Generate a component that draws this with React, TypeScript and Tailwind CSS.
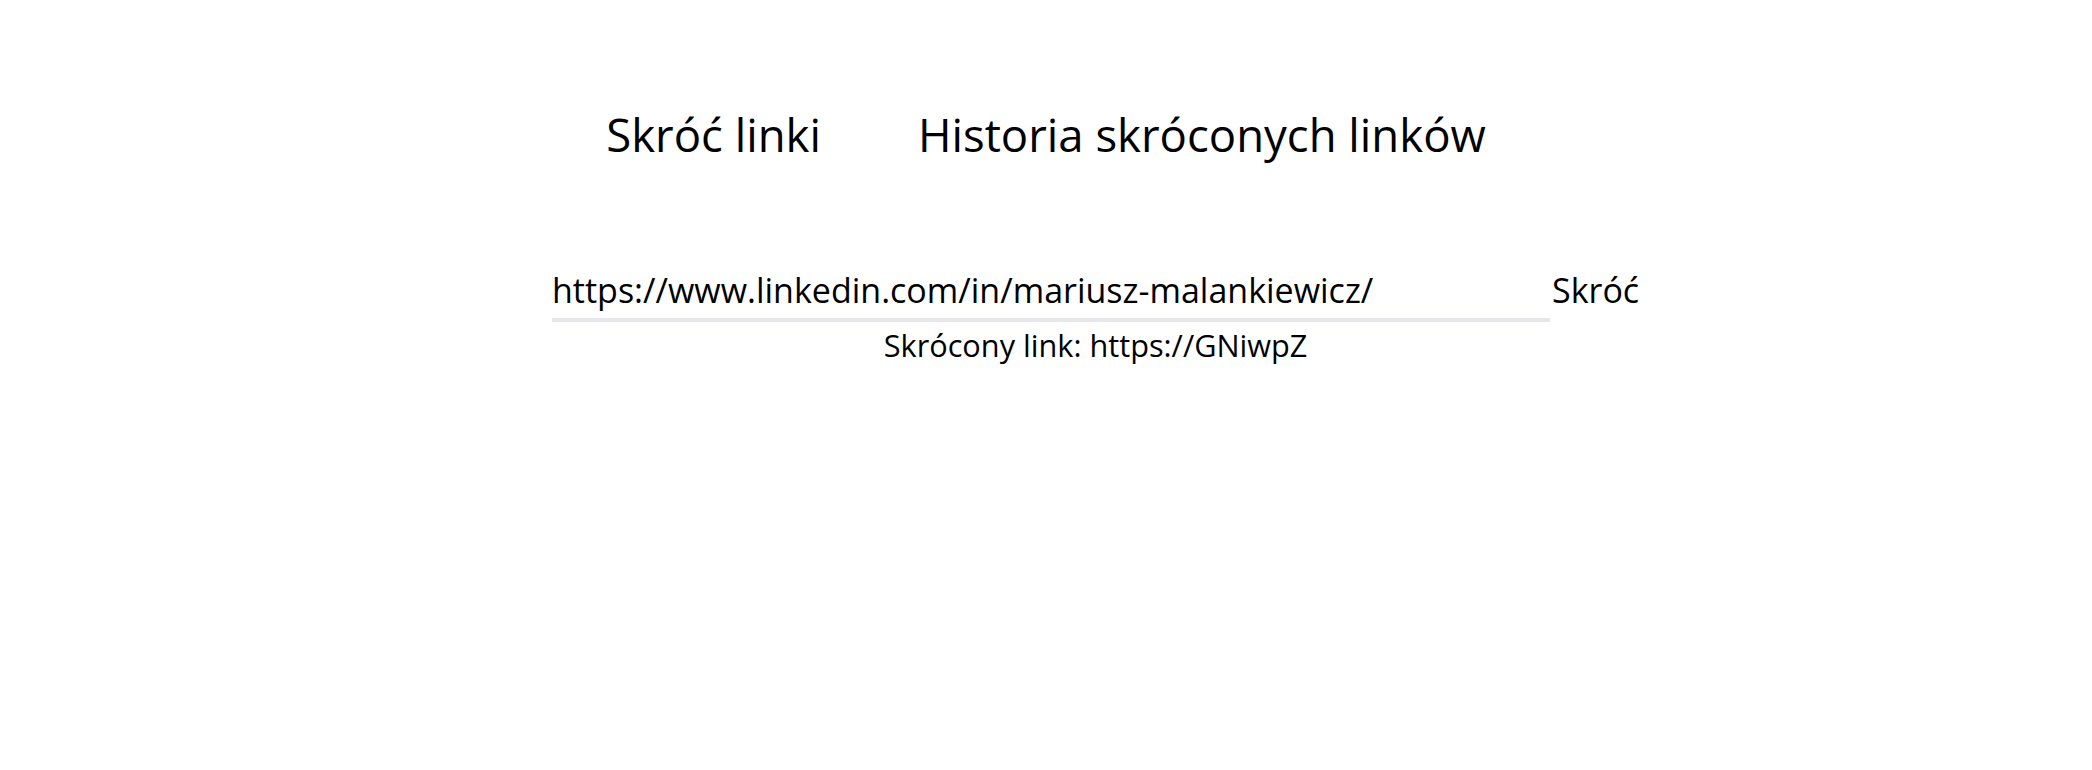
import React from "react";

export default function App() {
  return (
    <div className="min-h-[770px] w-full bg-white text-black" style={{ fontFamily: '"Open Sans", "Noto Sans", sans-serif' }}>
      <nav className="flex justify-center gap-[97px] pt-[104px]">
        <a className="text-[45.5px] leading-[60px] cursor-pointer">Skróć linki</a>
        <a className="text-[45.5px] leading-[60px] cursor-pointer">Historia skróconych linków</a>
      </nav>
      <div className="pl-[552px] pt-[103px]">
        <div className="inline-flex flex-col">
          <div className="flex items-start gap-[2px]">
            <input
              readOnly
              value="https://www.linkedin.com/in/mariusz-malankiewicz/"
              className="w-[998px] p-0 pb-[5px] border-0 border-b-4 border-[#e5e7eb] text-[34px] leading-[46px] h-[55px] outline-none bg-transparent text-black"
              style={{ fontFamily: '"Open Sans", "Noto Sans", sans-serif' }}
            />
            <button className="p-0 text-[34px] leading-[46px] bg-transparent text-black">Skróć</button>
          </div>
          <p className="mt-[3px] text-center text-[30.7px] leading-[40px]">Skrócony link: https://GNiwpZ</p>
        </div>
      </div>
    </div>
  );
}
